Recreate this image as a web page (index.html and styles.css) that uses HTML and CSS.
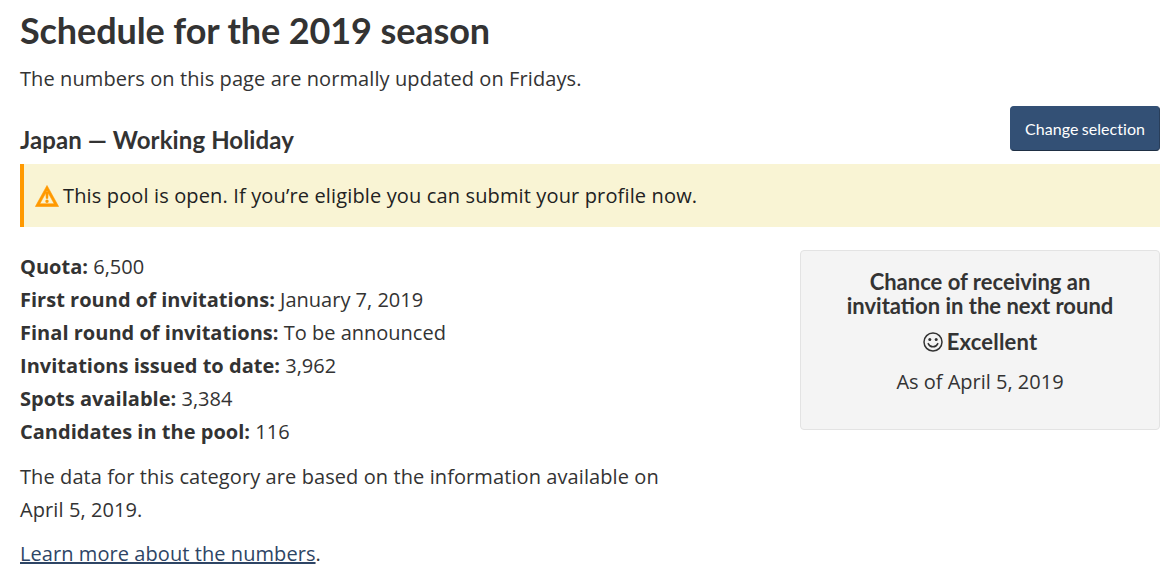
FILE: index.html
```html
<!DOCTYPE html>
<html lang="en">
<head>
<meta charset="utf-8">
<title>Schedule for the 2019 season</title>
<link rel="stylesheet" href="styles.css">
</head>
<body>
<main class="page">
  <h1 class="title">Schedule for the 2019 season</h1>
  <p class="lead">The numbers on this page are normally updated on Fridays.</p>
  <div class="head-row">
    <h2 class="subtitle">Japan — Working Holiday</h2>
    <button class="btn" type="button">Change selection</button>
  </div>
  <div class="alert">
    <svg class="warn" viewBox="0 0 24 22" aria-hidden="true">
      <path fill="#ff9900" stroke="#ff9900" stroke-width="0.6" stroke-linejoin="round" fill-rule="evenodd" d="M12 .5 23.600 21.500H.4ZM12 5.800 4.800 18.800H19.200Z"/>
      <path fill="#ff9900" d="M10.400 7h3.200l-.5 6.800h-2.200ZM12 14.600a1.700 1.700 0 1 1 0 3.400 1.700 1.700 0 0 1 0-3.400Z"/>
    </svg>
    <span>This pool is open. If you’re eligible you can submit your profile now.</span>
  </div>
  <div class="columns">
    <div class="details">
      <ul class="facts">
        <li><b>Quota:</b> 6,500</li>
        <li><b>First round of invitations:</b> January 7, 2019</li>
        <li><b>Final round of invitations:</b> To be announced</li>
        <li><b>Invitations issued to date:</b> 3,962</li>
        <li><b>Spots available:</b> 3,384</li>
        <li><b>Candidates in the pool:</b> 116</li>
      </ul>
      <p class="note">The data for this category are based on the information available on April 5, 2019.</p>
      <p class="more"><a href="#">Learn more about the numbers</a>.</p>
    </div>
    <aside class="card">
      <h3 class="card-title">Chance of receiving an invitation in the next round</h3>
      <div class="rating">
        <svg class="smile" viewBox="0 0 20 20" aria-hidden="true">
          <circle cx="10" cy="10" r="9" fill="none" stroke="#333" stroke-width="1.500"/>
          <circle cx="6.800" cy="7.400" r="1.500" fill="#333"/>
          <circle cx="13.200" cy="7.400" r="1.500" fill="#333"/>
          <path d="M5.200 11.600c1.800 4.200 7.800 4.200 9.600 0" fill="none" stroke="#333" stroke-width="1.500" stroke-linecap="round"/>
        </svg>
        <span>Excellent</span>
      </div>
      <p class="asof">As of April 5, 2019</p>
    </aside>
  </div>
</main>
</body>
</html>
```
FILE: styles.css
```css
* { box-sizing: border-box; }
html, body { margin: 0; padding: 0; background: #fff; }
body {
  font-family: "Open Sans", "Noto Sans", sans-serif;
  font-size: 20px;
  line-height: 33px;
  color: #333;
  height: 579px;
  overflow: hidden;
}
.page { padding: 0 15px 0 20px; }
.title {
  font-family: Lato, sans-serif;
  font-weight: 700;
  font-size: 36px;
  line-height: 38px;
  letter-spacing: -0.1px;
  margin: 0;
  padding-top: 11px;
  box-sizing: content-box;
}
.lead { margin: 13px 0 0; letter-spacing: 0.09px; }
.head-row {
  display: flex;
  justify-content: space-between;
  align-items: flex-start;
  margin-top: 11px;
  height: 47px;
}
.subtitle {
  font-family: Lato, sans-serif;
  font-weight: 700;
  font-size: 24px;
  line-height: 30px;
  margin: 19px 0 0;
  letter-spacing: 0.1px;
}
.btn {
  font-family: Lato, sans-serif;
  font-size: 16px;
  line-height: 20px;
  word-spacing: -1px;
  letter-spacing: 0.07px;
  color: #fff;
  background: #335075;
  border: 1px solid #335075;
  border-color: #335075 #293e5a #1f2f44 #335075;
  border-radius: 4px;
  width: 150px;
  height: 45px;
  padding: 0;
}
.alert {
  display: flex;
  align-items: center;
  gap: 4px;
  height: 63px;
  margin-top: 11px;
  padding-left: 11px;
  background: #f9f4d4;
  border-left: 4px solid #ff9900;
  color: #222;
  letter-spacing: 0.14px;
}
.warn { width: 24px; height: 22px; flex: none; }
.columns {
  display: flex;
  justify-content: space-between;
  align-items: flex-start;
  margin-top: 23px;
}
.details { width: 660px; }
.facts { list-style: none; margin: 0; padding: 0; }
.facts b { font-weight: 700; letter-spacing: 0.02px; }
.note { margin: 12px 0 0; letter-spacing: 0.09px; }
.more { margin: 11px 0 0; letter-spacing: 0.07px; }
.more a { color: #2e4565; text-decoration: underline; }
.card {
  width: 360px;
  height: 180px;
  background: #f4f4f4;
  border: 1px solid #e3e3e3;
  border-radius: 4px;
  text-align: center;
  padding: 19px 30px 0;
}
.card-title {
  font-family: Lato, sans-serif;
  font-weight: 700;
  font-size: 22px;
  line-height: 24px;
  margin: 0;
}
.rating {
  display: flex;
  justify-content: center;
  align-items: center;
  gap: 4px;
  font-family: Lato, sans-serif;
  font-weight: 700;
  font-size: 22px;
  line-height: 26px;
  letter-spacing: 0.2px;
  margin-top: 11px;
}
.smile { width: 20px; height: 20px; flex: none; }
.asof { margin: 10px 0 0; }
```
